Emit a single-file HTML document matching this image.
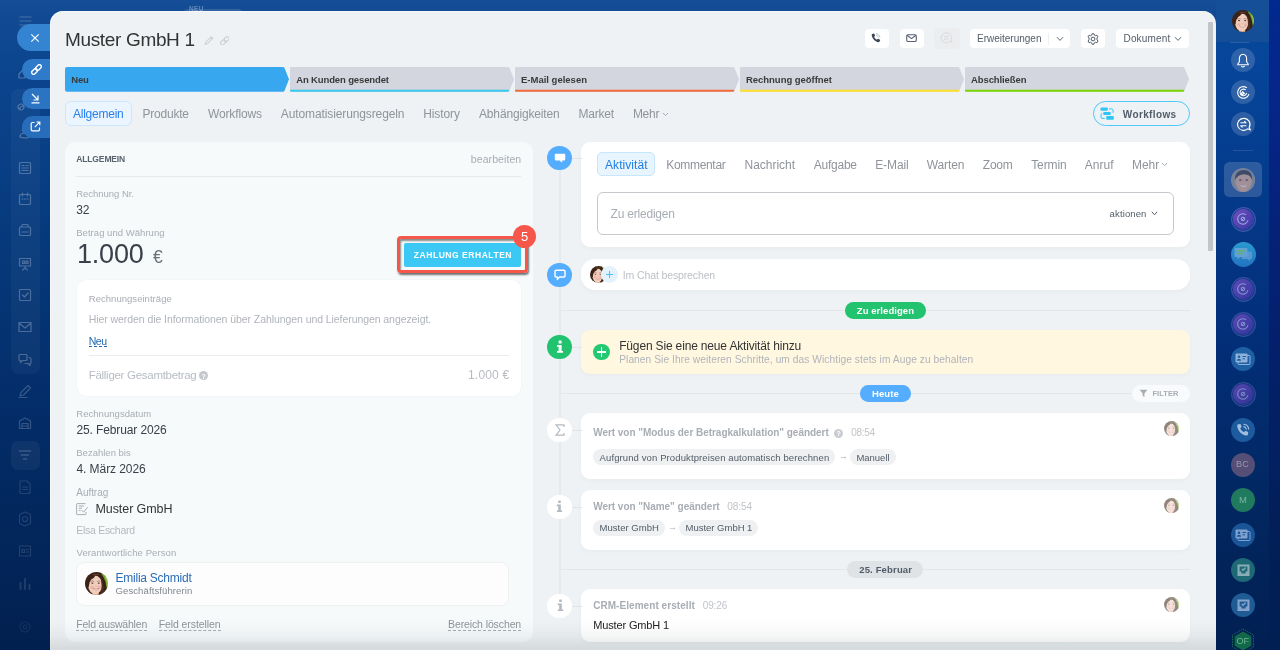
<!DOCTYPE html>
<html lang="de">
<head>
<meta charset="utf-8">
<title>CRM</title>
<style>
*{box-sizing:border-box;margin:0;padding:0}
html,body{width:1280px;height:650px;overflow:hidden}
body{font-family:"Liberation Sans",sans-serif;position:relative;background:linear-gradient(180deg,#154e97 0%,#124b94 2%,#0c468f 9%,#073c80 31%,#032c67 65%,#02204f 100%);color:#333}
.abs{position:absolute}
#rightdark{position:absolute;left:1269px;top:0;width:11px;height:650px;background:linear-gradient(180deg,#01298f 0%,#06268c 12%,#04206f 48%,#021f5a 80%,#011f52 100%)}
#rightbg{position:absolute;left:1216px;top:0;width:53px;height:650px;background:linear-gradient(180deg,#144f98 0%,#134e97 6.400%,#07479a 6.500%,#06459a 10%,#03307c 48%,#02265f 80%,#011f52 100%)}
#panel{position:absolute;left:49.500px;top:10.700px;width:1166.300px;height:660px;background:#eef2f4;border-radius:13px 13px 0 0;box-shadow:inset 0.800px 0.800px 0 rgba(255,255,255,0.6)}
#scroll{position:absolute;left:1208px;top:22px;width:5px;height:229px;background:#c2c5c6;border-radius:1px}
.t{position:absolute;white-space:nowrap;line-height:1}
/* header */
#title{left:65px;top:30px;font-size:19px;color:#333}
.hbtn{position:absolute;top:28.500px;height:19.300px;background:#fff;border-radius:4px}
/* stages */
.stage{position:absolute;top:67px;height:24.700px}
.stage svg{position:absolute;left:0;top:0}
.sl{top:75.100px;font-size:9.5px;font-weight:bold;color:#3a3a3a}
/* tabs */
.tab{position:absolute;top:108px;font-size:12px;color:#8f949b;white-space:nowrap;line-height:1}
/* left card */
#lcard{position:absolute;left:65px;top:142px;width:468px;height:500px;background:#f6fafb;border-radius:10px}
.lbl{position:absolute;left:76px;font-size:9.5px;color:#a8adb4;white-space:nowrap;line-height:1}
.val{position:absolute;left:76px;font-size:12px;color:#3a4049;white-space:nowrap;line-height:1}
.dash{border-bottom:1px dashed #9aa0a8}
/* timeline */
.card{position:absolute;left:580.800px;width:609.400px;background:#fff;border-radius:9px;box-shadow:0 2px 4px rgba(90,105,120,0.045)}
.circ{position:absolute;left:547.300px;width:24.600px;height:24.600px;border-radius:50%;margin-top:-0.300px}
.pill{position:absolute;height:16.600px;border-radius:8.300px;margin-top:0.100px;font-size:9.5px;font-weight:bold;text-align:center;line-height:16px;white-space:nowrap}
.chip{position:absolute;height:16px;border-radius:8px;background:#eef0f1;font-size:9.5px;color:#525c69;line-height:16px;padding:0 6px;white-space:nowrap}
.ct{font-size:9.5px;color:#525c69}
.pt{font-size:9.5px;font-weight:bold}
.hline{position:absolute;height:1px;background:#e4e7ea}
.ricon{position:absolute;left:1231px;width:24px;height:24px;border-radius:50%}
</style>
</head>
<body>
<div id="wrap" style="position:absolute;left:0;top:0;width:1280px;height:650px;will-change:transform">
<svg width="0" height="0" style="position:absolute"><defs>
<filter id="fb" x="-10%" y="-10%" width="120%" height="120%"><feGaussianBlur stdDeviation="1.6"/></filter>
<clipPath id="fc"><circle cx="50" cy="50" r="50"/></clipPath>
<symbol id="face" viewBox="0 0 100 100"><g clip-path="url(#fc)"><g filter="url(#fb)">
<rect x="-5" y="-5" width="110" height="110" fill="#3b2419"/>
<path d="M70 6 L104 14 L104 78 L94 70 Q92 36 70 6 Z" fill="#6d9f2e"/>
<path d="M86 22 Q96 40 94 62 L100 60 L100 20 Z" fill="#8fc043"/>
<path d="M36 84 H60 V104 H30 Z" fill="#d8a585"/>
<ellipse cx="44" cy="56" rx="30" ry="41" fill="#f0cdbc"/>
<ellipse cx="30" cy="66" rx="9" ry="8" fill="#eab5a4" opacity="0.8"/>
<ellipse cx="62" cy="66" rx="8" ry="8" fill="#eab5a4" opacity="0.8"/>
<path d="M6 64 Q2 14 46 6 Q86 6 82 62 Q80 36 64 22 Q56 15 44 17 Q40 26 28 32 Q18 42 16 64 Z" fill="#3b2419"/><path d="M30 12 Q50 2 68 14 Q56 10 44 17 Q36 14 30 12 Z" fill="#5b3c2b"/>
<path d="M70 30 Q86 50 80 104 L62 104 Q76 80 72 56 Z" fill="#4a2f22"/>
<path d="M8 60 Q10 84 24 100 L4 100 Z" fill="#3b2419"/>
<ellipse cx="32" cy="48" rx="5" ry="2.800" fill="#4a2c22"/>
<ellipse cx="60" cy="48" rx="5" ry="2.800" fill="#4a2c22"/>
<path d="M24 41 Q32 37 40 41 M52 41 Q60 37 68 41" stroke="#6b4434" stroke-width="2" fill="none"/>
<path d="M44 60 Q48 66 52 60" stroke="#d99c88" stroke-width="2.500" fill="none"/>
<path d="M31 70 Q48 90 65 70 Q48 76 31 70 Z" fill="#c4726c"/>
<path d="M35 72.500 Q48 84 61 72.500 Q48 77 35 72.500 Z" fill="#fff"/>
</g></g></symbol>
</defs></svg>
<div id="rightbg"></div>
<div id="rightdark"></div>
<div id="leftbar">
<div class="abs" style="left:183px;top:8.500px;width:60px;height:12px;border-radius:5px;background:rgba(255,255,255,0.13)"></div>
<div class="t" style="left:189px;top:6.300px;font-size:6.500px;font-weight:bold;color:rgba(255,255,255,0.33);letter-spacing:0.300px">NEU</div>
<div class="abs" style="left:11px;top:89px;width:29px;height:285px;border-radius:7px;background:rgba(255,255,255,0.035)"></div>
<div class="abs" style="left:11px;top:441px;width:29px;height:29px;border-radius:7px;background:rgba(255,255,255,0.05)"></div>
<g></g>
<svg class="abs" style="left:0;top:0" width="49" height="650" viewBox="0 0 49 650">
<g fill="none" stroke="#fff" stroke-width="1.2" stroke-linecap="round" stroke-linejoin="round">
<g opacity="0.22"><path d="M20 17 H31 M20 21 H31 M20 25 H31"/></g>
<g opacity="0.28"><path d="M19 74 L25 68 V78 H19 Z"/><path d="M21 104 a3 3 0 1 0 0.1 0 M20 109 Q20 106 24 106"/><path d="M20 137 Q20 133 25 133 Q30 133 30 137 Q25 139 20 137 Z M25 127 a2.600 2.600 0 1 0 0.1 0"/></g>
<g opacity="0.26">
<path d="M20.500 162.500 H29.500 Q30.500 162.500 30.500 163.500 V172.500 Q30.500 173.500 29.500 173.500 H20.500 Q19.500 173.500 19.500 172.500 V163.500 Q19.500 162.500 20.500 162.500 Z M22 165.500 H24 M22 168 H28 M22 170.500 H28 M26 165.500 H28"/>
<path d="M20.500 194.500 H29.500 Q30.500 194.500 30.500 195.500 V203.500 Q30.500 204.500 29.500 204.500 H20.500 Q19.500 204.500 19.500 203.500 V195.500 Q19.500 194.500 20.500 194.500 Z M22.500 193 V196 M27.500 193 V196 M22 199 H23 M24.500 199 H25.500 M27 199 H28"/>
<path d="M19.500 228 Q19.500 227 20.500 227 H29.500 Q30.500 227 30.500 228 V234.500 Q30.500 235.500 29.500 235.500 H20.500 Q19.500 235.500 19.500 234.500 Z M21 227 L22.500 224.500 H27.500 L29 227 M22 232 H28"/>
<path d="M19.500 258.500 H30.500 V266 H19.500 Z M22.500 261 H24.500 V263.500 H22.500 Z M26 261 H28 V263.500 H26 Z M25 266 V268 M22.500 270 L25 268 L27.500 270"/>
<path d="M20.500 289.500 H29.500 Q30.500 289.500 30.500 290.500 V299.500 Q30.500 300.500 29.500 300.500 H20.500 Q19.500 300.500 19.500 299.500 V290.500 Q19.500 289.500 20.500 289.500 Z M22.500 295 L24.500 297 L28 293"/>
<path d="M19 322.500 H31 V331.500 H19 Z M19 323 L25 328 L31 323"/>
<path d="M19 355.500 Q19 354.500 20 354.500 H26 Q27 354.500 27 355.500 V359.500 Q27 360.500 26 360.500 H22.500 L20.500 362.500 V360.500 H20 Q19 360.500 19 359.500 Z M29 357.500 Q31 357.500 31 359 V362.500 Q31 363.500 30 363.500 V365.500 L28 363.500 H25"/>
</g>
<g opacity="0.2">
<path d="M20 396 L21 392.500 L28 385.500 L30.500 388 L23.500 395 Z M19 397.500 H27"/>
<path d="M19.500 428.500 V421 L25 418 L30.500 421 V428.500 Z M22 428.500 V423.500 H28 V428.500 M22 426 H28"/>
</g>
<g opacity="0.13">
<path d="M19.500 451 H30.500 M21.500 455 H28.500 M23.500 459 H26.500" stroke-width="1.800"/>
<path d="M20.500 481 H27 L30 484 V492.500 Q30 493.500 29 493.500 H21 Q20 493.500 20 492.500 V482 Q20 481 20.500 481 Z M22.500 487 H27.500 M22.500 489.500 H27.500"/>
<path d="M20.500 514 L25 512 L29.500 514 Q30.500 514.500 30.500 515.500 V522.500 Q30.500 523.500 29.500 524 L25 526 L20.500 524 Q19.500 523.500 19.500 522.500 V515.500 Q19.500 514.500 20.500 514 Z M25 516.500 a2.600 2.600 0 1 0 0.1 0"/>
<path d="M19.500 546 H30.500 V556 H19.500 Z M22 549.500 H24.500 V552.500 H22 Z M26.500 549.500 H28.500 M26.500 552 H28.500"/>
<path d="M20.500 589 V583 M25 589 V579 M29.500 589 V585"  stroke-width="1.800"/>
</g>
<g opacity="0.07"><circle cx="25" cy="593" r="0"/><circle cx="25" cy="627" r="5"/><circle cx="25" cy="627" r="1.800"/></g>
</g>
</svg>
<!-- pills -->
<div class="abs" style="left:17px;top:24px;width:70px;height:27px;border-radius:14px;background:#3584d2"></div>
<svg class="abs" style="left:30px;top:33px" width="10" height="10" viewBox="0 0 10 10"><path d="M1.300 1.300 L8.700 8.700 M8.700 1.300 L1.300 8.700" stroke="#fff" stroke-width="1.150" fill="none"/></svg>
<div class="abs" style="left:22px;top:59px;width:70px;height:21px;border-radius:11px;background:#2f7bc9"></div>
<svg class="abs" style="left:30.500px;top:63.500px" width="11" height="11" viewBox="0 0 11 11"><g transform="translate(5.500 5.500) rotate(-45)" fill="none" stroke="#fff" stroke-width="1.350"><rect x="-6" y="-1.900" width="6.400" height="3.800" rx="1.900"/><rect x="-0.400" y="-1.900" width="6.400" height="3.800" rx="1.900"/></g></svg>
<div class="abs" style="left:22px;top:87.500px;width:70px;height:21px;border-radius:11px;background:#2b74c2"></div>
<svg class="abs" style="left:30px;top:93px" width="11" height="11" viewBox="0 0 11 11"><g fill="none" stroke="#fff" stroke-width="1.200"><path d="M2 1 L8 7 M8 2.500 V7 H3.500 M1.500 9.800 H9.500"/></g></svg>
<div class="abs" style="left:22px;top:116px;width:70px;height:22px;border-radius:11px;background:#276dbb"></div>
<svg class="abs" style="left:30px;top:121px" width="11" height="11" viewBox="0 0 11 11"><g fill="none" stroke="#fff" stroke-width="1.200"><path d="M4.500 1.500 H2.500 Q1.200 1.500 1.200 2.800 V8.500 Q1.200 9.800 2.500 9.800 H8.200 Q9.500 9.800 9.500 8.500 V6.500"/><path d="M4.800 6.200 L9.600 1.200 M6.500 1 H9.800 V4.300"/></g></svg>
</div>
<div id="panel"></div>
<div id="scroll"></div>
<div id="header">
<div class="t" id="title" style="letter-spacing:-0.341px;left:65px;">Muster GmbH 1</div>
<svg class="abs" style="left:204.300px;top:35.300px" width="10.500" height="10.500" viewBox="0 0 10 10"><path d="M1.200 8.800 L1.800 6.600 L6.800 1.600 L8.400 3.200 L3.400 8.200 Z M6 2.400 L7.600 4" fill="none" stroke="#cdd0d4" stroke-width="1.050"/></svg>
<svg class="abs" style="left:219.700px;top:35.700px" width="9.600" height="9.600" viewBox="0 0 11 11"><g transform="translate(5.500 5.500) rotate(-42)" fill="none" stroke="#cdd0d4" stroke-width="1.300"><rect x="-5.800" y="-2.200" width="6.400" height="4.400" rx="2.200"/><rect x="-0.600" y="-2.200" width="6.400" height="4.400" rx="2.200"/></g></svg>
<div class="hbtn" style="left:864.500px;width:24px"><svg class="abs" style="left:6.500px;top:4.300px" width="10" height="10" viewBox="0 0 10 10"><path d="M1.300 0.900 L2.700 0.500 Q3.100 0.400 3.300 0.800 L4 2.600 Q4.100 3 3.800 3.200 L3.100 3.800 C3.600 5 4.600 6.100 5.900 6.700 L6.600 5.900 Q6.900 5.600 7.300 5.800 L8.900 6.700 Q9.300 6.900 9.100 7.300 L8.600 8.600 C8.400 9.100 7.900 9.300 7.400 9.200 C4 8.500 1.300 5.700 0.700 2.200 C0.600 1.600 0.800 1.100 1.300 0.900 Z" fill="#3d4753"/><path d="M5.400 0.800 C7.200 1 8.600 2.400 8.800 4.200 M5.600 2.600 C6.300 2.800 6.900 3.400 7.100 4.100" fill="none" stroke="#9aa1aa" stroke-width="0.700" stroke-linecap="round" stroke-dasharray="1.200 0.800"/></svg></div>
<div class="hbtn" style="left:899.500px;width:24px"><svg class="abs" style="left:6.500px;top:5.600px" width="11" height="8.250" viewBox="0 0 12 9"><rect x="0.800" y="0.800" width="10.400" height="7.400" rx="1.300" fill="none" stroke="#586270" stroke-width="1.200"/><path d="M1.200 1.300 L6 5 L10.800 1.300" fill="none" stroke="#586270" stroke-width="1.200"/></svg></div>
<div class="hbtn" style="left:934px;width:25.500px;top:27.700px;height:21px;background:#ebedef;border-radius:5px"><svg class="abs" style="left:6px;top:4px" width="13" height="12" viewBox="0 0 13 12"><g fill="none" stroke="#d6d9dd" stroke-width="0.900"><path d="M6.2 0.8 A5 5 0 1 0 9.6 9.4 L12 10.4 L11 8.2 A5 5 0 0 0 6.2 0.8 Z"/><path d="M4 4.6 H8.2 M7 3.4 L8.3 4.6 M8.4 7 H4.2 M5.4 8.2 L4.1 7"/></g></svg></div>
<div class="hbtn" style="left:970px;width:100px"><span class="t" style="left:7px;top:5px;font-size:10px;color:#525c69">Erweiterungen</span><div class="abs" style="left:78px;top:4px;width:1px;height:12px;background:#edf0f2"></div><svg class="abs" style="left:86px;top:7px" width="8" height="6" viewBox="0 0 8 6"><path d="M1 1.2 L4 4.400 L7 1.200" fill="none" stroke="#5f6975" stroke-width="1"/></svg></div>
<div class="hbtn" style="left:1081px;width:24px"><svg class="abs" style="left:6px;top:4px" width="12" height="12" viewBox="0 0 12 12"><path d="M5 0.8 H7 L7.4 2.2 L8.6 2.8 L9.9 2.2 L11 3.9 L10 4.9 V6.9 L11 8 L9.9 9.8 L8.6 9.2 L7.4 9.8 L7 11.2 H5 L4.6 9.8 L3.4 9.2 L2.1 9.8 L1 8 L2 6.9 V4.9 L1 3.9 L2.1 2.2 L3.4 2.8 L4.6 2.2 Z" fill="none" stroke="#525c69" stroke-width="1" stroke-linejoin="round"/><circle cx="6" cy="6" r="1.9" fill="none" stroke="#525c69" stroke-width="1"/></svg></div>
<div class="hbtn" style="left:1116px;width:73px"><span class="t" style="left:7.500px;top:5px;font-size:10px;color:#525c69;letter-spacing:0.170px">Dokument</span><svg class="abs" style="left:58px;top:7px" width="8" height="6" viewBox="0 0 8 6"><path d="M1 1.2 L4 4.400 L7 1.200" fill="none" stroke="#5f6975" stroke-width="1"/></svg></div>
</div>
<div id="stages"><div class="stage" style="left:65px;width:224px"><svg width="224" height="24.700" viewBox="0 0 224 24" preserveAspectRatio="none"><path d="M2 0 H218 Q219 0 219.5 1 L224 12 L219.5 23 Q219 24 218 24 H2 Q0 24 0 22 V2 Q0 0 2 0 Z" fill="#37a8ef"/></svg></div><div class="stage" style="left:290px;width:224px"><svg width="224" height="24.700" viewBox="0 0 224 24" preserveAspectRatio="none"><path d="M1 0 H218 Q219 0 219.5 1 L224 12 L219.5 23 Q219 24 218 24 H1 Q0 24 0 23 V1 Q0 0 1 0 Z" fill="#d3d6de"/><path d="M0 22.2 H219.3 L218.6 24 H1 Q0 24 0 23 Z" fill="#39c8f0"/></svg></div><div class="stage" style="left:515px;width:224px"><svg width="224" height="24.700" viewBox="0 0 224 24" preserveAspectRatio="none"><path d="M1 0 H218 Q219 0 219.5 1 L224 12 L219.5 23 Q219 24 218 24 H1 Q0 24 0 23 V1 Q0 0 1 0 Z" fill="#d3d6de"/><path d="M0 22.2 H219.3 L218.6 24 H1 Q0 24 0 23 Z" fill="#f26b3a"/></svg></div><div class="stage" style="left:740px;width:224px"><svg width="224" height="24.700" viewBox="0 0 224 24" preserveAspectRatio="none"><path d="M1 0 H218 Q219 0 219.5 1 L224 12 L219.5 23 Q219 24 218 24 H1 Q0 24 0 23 V1 Q0 0 1 0 Z" fill="#d3d6de"/><path d="M0 22.2 H219.3 L218.6 24 H1 Q0 24 0 23 Z" fill="#ffe028"/></svg></div><div class="stage" style="left:965px;width:224px"><svg width="224" height="24.700" viewBox="0 0 224 24" preserveAspectRatio="none"><path d="M1 0 H218 Q219 0 219.5 1 L224 12 L219.5 23 Q219 24 218 24 H1 Q0 24 0 23 V1 Q0 0 1 0 Z" fill="#d3d6de"/><path d="M0 22.2 H219.3 L218.6 24 H1 Q0 24 0 23 Z" fill="#7bd500"/></svg></div></div>
<div class="t sl" style="letter-spacing:-0.131px;left:71.2px">Neu</div>
<div class="t sl" style="letter-spacing:-0.130px;left:296.2px">An Kunden gesendet</div>
<div class="t sl" style="letter-spacing:0.000px;left:521px">E-Mail gelesen</div>
<div class="t sl" style="letter-spacing:-0.035px;left:746px">Rechnung geöffnet</div>
<div class="t sl" style="letter-spacing:-0.099px;left:971px">Abschließen</div>
<div id="tabs">
<div class="abs" style="left:65px;top:101px;width:66.700px;height:25px;background:#ebf5ff;border:1px solid #cbe6fd;border-radius:6px"></div>
<div class="tab" style="letter-spacing:-0.243px;left:73px;color:#2680f0">Allgemein</div>
<div class="tab" style="letter-spacing:-0.220px;left:142.5px">Produkte</div>
<div class="tab" style="letter-spacing:-0.140px;left:208px">Workflows</div>
<div class="tab" style="letter-spacing:-0.113px;left:280.8px">Automatisierungsregeln</div>
<div class="tab" style="letter-spacing:-0.091px;left:423.2px">History</div>
<div class="tab" style="letter-spacing:-0.157px;left:479px">Abhängigkeiten</div>
<div class="tab" style="letter-spacing:-0.175px;left:578.4px">Market</div>
<div class="tab" style="letter-spacing:-0.281px;left:632.9px">Mehr</div>
<svg class="abs" style="left:662px;top:112px" width="7" height="5" viewBox="0 0 7 5"><path d="M1 1 L3.5 3.6 L6 1" fill="none" stroke="#a8adb4" stroke-width="1"/></svg>
<div class="abs" style="left:1093px;top:101px;width:97px;height:25px;border:1px solid #4fc8fb;border-radius:13px"></div>
<svg class="abs" style="left:1100px;top:107px" width="15" height="14" viewBox="0 0 15 14"><g fill="#2fc6f6"><rect x="0.5" y="0.5" width="7.3" height="3.2" rx="1"/><rect x="3.2" y="4.9" width="7.6" height="3.1" rx="1"/><rect x="6.2" y="9" width="7.6" height="3.7" rx="1"/></g><path d="M9 1.900 H11.600 Q13.100 1.900 13.100 3.400 V5.800 M2.200 6.600 H2 Q1 6.600 1 7.600 V10.400 Q1 11.400 2 11.400 H4.800" fill="none" stroke="#2fc6f6" stroke-width="1"/></svg>
<div class="t" style="letter-spacing:0.364px;left:1122.8px;top:109.500px;font-size:10px;font-weight:bold;color:#525c69">Workflows</div>
</div>
<div id="lcard"></div>
<div id="left">
<div class="t" style="letter-spacing:-0.133px;left:76.25px;top:155.2px;font-size:8.5px;font-weight:bold;color:#59626e;">ALLGEMEIN</div>
<div class="t" style="letter-spacing:0.086px;left:470.8px;top:154px;font-size:10.5px;color:#a8adb4">bearbeiten</div>
<div class="abs" style="left:76px;top:176px;width:445px;height:1px;background:#e5e9ec"></div>
<div class="lbl" style="letter-spacing:-0.031px;left:76.25px;top:189px">Rechnung Nr.</div>
<div class="val" style="letter-spacing:-0.109px;left:76.25px;top:204px">32</div>
<div class="lbl" style="letter-spacing:0.034px;left:76.25px;top:227.8px">Betrag und Währung</div>
<div class="t" style="letter-spacing:-0.204px;left:77px;top:241px;font-size:27px;color:#3a404a">1.000</div>
<div class="t" style="letter-spacing:0.000px;left:153px;top:249px;font-size:17.500px;color:#6a717b">€</div>
<!-- highlight button -->
<div class="abs" style="left:397px;top:236px;width:131px;height:37px;border:3px solid #f5574b;border-radius:4px;box-shadow:1px 2px 2px rgba(0,0,0,0.55), inset 1px 2px 2px rgba(0,0,0,0.45)"></div>
<div class="abs" style="left:404px;top:243px;width:117px;height:24px;background:#3bc8f5;border-radius:2px"></div>
<div class="t" style="letter-spacing:0.543px;left:413.8px;top:251px;font-size:8.5px;font-weight:bold;color:#fff;">ZAHLUNG ERHALTEN</div>
<div class="abs" style="left:513px;top:225px;width:23px;height:23px;border-radius:50%;background:#f5574b"></div>
<div class="t" style="left:521px;top:230px;font-size:13px;color:#fff">5</div>
<!-- inner card -->
<div class="abs" style="left:77px;top:280px;width:444.200px;height:116.400px;background:#fff;border-radius:9px;box-shadow:0 0 0 0.600px #f1f3f4"></div>
<div class="t" style="letter-spacing:0.037px;left:88.75px;top:294px;font-size:9.5px;color:#a8adb4">Rechnungseinträge</div>
<div class="t" style="letter-spacing:-0.070px;left:88.75px;top:314px;font-size:10.5px;color:#b0b4ba">Hier werden die Informationen über Zahlungen und Lieferungen angezeigt.</div>
<div class="t" style="letter-spacing:-0.511px;left:88.75px;top:336.300px;font-size:10.500px;color:#2067b0">Neu</div>
<div class="abs" style="left:89px;top:346px;width:18px;height:0;border-top:1px dashed #2067b0"></div>
<div class="abs" style="left:89px;top:355px;width:420px;height:1px;background:#e8ecee"></div>
<div class="t" style="letter-spacing:-0.289px;left:88.75px;top:369.500px;font-size:11.5px;color:#b8bcc2">Fälliger Gesamtbetrag</div>
<div class="abs" style="left:199px;top:371px;width:9px;height:9px;border-radius:50%;background:#c4c8cc"></div>
<div class="t" style="left:201.5px;top:372.5px;font-size:7px;font-weight:bold;color:#fff">?</div>
<div class="t" style="letter-spacing:0.192px;left:468px;top:369px;font-size:12px;color:#b8bcc2">1.000 €</div>
<div class="lbl" style="letter-spacing:0.041px;left:76.25px;top:409px">Rechnungsdatum</div>
<div class="val" style="letter-spacing:-0.122px;left:76.5px;top:424px">25. Februar 2026</div>
<div class="lbl" style="letter-spacing:0.008px;left:76.25px;top:448px">Bezahlen bis</div>
<div class="val" style="letter-spacing:-0.073px;left:76.5px;top:463px">4. März 2026</div>
<div class="lbl" style="letter-spacing:-0.043px;font-size:10px;left:76.25px;top:487.8px">Auftrag</div>
<svg class="abs" style="left:76px;top:503px" width="13" height="13" viewBox="0 0 13 13"><g fill="none" stroke="#a8adb4" stroke-width="1"><path d="M9.5 0.6 H1.2 Q0.6 0.6 0.6 1.2 V11 Q0.6 11.6 1.2 11.6 H9.4 Q10 11.6 10 11 V9"/><path d="M2.8 3 H8 M2.8 5.2 H6 M2.8 7.4 H4.6"/><path d="M5.6 7.2 L7.6 9.2 L11.6 4.2"/></g></svg>
<div class="t" style="letter-spacing:-0.080px;left:95.5px;top:503.2px;font-size:12.5px;color:#333">Muster GmbH</div>
<div class="t" style="letter-spacing:-0.284px;left:76.25px;top:525px;font-size:10.5px;color:#b5b9be">Elsa Eschard</div>
<div class="lbl" style="letter-spacing:0.098px;left:76.5px;top:548px">Verantwortliche Person</div>
<div class="abs" style="left:76px;top:562px;width:433px;height:44px;background:#fdfdfd;border:1px solid #eef0f2;border-radius:8px"></div>
<svg class="abs" style="left:84.600px;top:571.800px" width="23" height="23"><use href="#face"/></svg>
<div class="t" style="letter-spacing:-0.239px;left:115.5px;top:571.800px;font-size:12px;color:#2b6cb3">Emilia Schmidt</div>
<div class="t" style="letter-spacing:0.110px;left:115.5px;top:586px;font-size:9.5px;color:#80868e">Geschäftsführerin</div>
<div class="t" style="letter-spacing:-0.197px;left:76.25px;top:619px;font-size:10.5px;color:#8f949b">Feld auswählen</div>
<div class="abs" style="left:76px;top:630px;width:71px;height:0;border-top:1px dashed #a8adb4"></div>
<div class="t" style="letter-spacing:-0.099px;left:158.75px;top:619px;font-size:10.5px;color:#8f949b">Feld erstellen</div>
<div class="abs" style="left:159px;top:630px;width:62px;height:0;border-top:1px dashed #a8adb4"></div>
<div class="t" style="letter-spacing:-0.108px;left:448px;top:619px;font-size:10.5px;color:#8f949b">Bereich löschen</div>
<div class="abs" style="left:448px;top:630px;width:73px;height:0;border-top:1px dashed #a8adb4"></div>
</div>
<div id="timeline">
<div class="abs" style="left:559px;top:160px;width:1.800px;height:446px;background:#e7eaed"></div>
<!-- card A -->
<div class="card" style="top:142px;height:105px"></div>
<div class="abs" style="left:570px;top:158px;width:12px;height:1px;background:#e1e5e8"></div>
<div class="circ" style="top:146px;background:#55adff"></div>
<svg class="abs" style="left:554px;top:153px" width="12" height="11" viewBox="0 0 12 11"><path d="M1.6 0.8 H10.4 Q11.2 0.8 11.2 1.6 V6.6 Q11.2 7.4 10.4 7.4 H8.2 V9.8 L5.6 7.4 H1.6 Q0.8 7.4 0.8 6.6 V1.6 Q0.8 0.8 1.6 0.8 Z" fill="#fff"/></svg>
<div class="abs" style="left:597px;top:152px;width:58px;height:24px;background:#e8f5fe;border:1px solid #c5e6fb;border-radius:5px"></div>
<div class="tab" style="letter-spacing:0.061px;left:605px;top:158.800px;color:#1f7ee6">Aktivität</div>
<div class="tab" style="letter-spacing:-0.316px;left:666.25px;top:158.800px">Kommentar</div>
<div class="tab" style="letter-spacing:-0.024px;left:744.5px;top:158.800px">Nachricht</div>
<div class="tab" style="letter-spacing:-0.244px;left:813.75px;top:158.800px">Aufgabe</div>
<div class="tab" style="letter-spacing:-0.083px;left:875.2px;top:158.800px">E-Mail</div>
<div class="tab" style="letter-spacing:-0.129px;left:926.8px;top:158.800px">Warten</div>
<div class="tab" style="letter-spacing:-0.230px;left:982.8px;top:158.800px">Zoom</div>
<div class="tab" style="letter-spacing:-0.083px;left:1031.2px;top:158.800px">Termin</div>
<div class="tab" style="letter-spacing:0.028px;left:1084.8px;top:158.800px">Anruf</div>
<div class="tab" style="letter-spacing:-0.051px;left:1132px;top:158.800px">Mehr</div>
<svg class="abs" style="left:1161px;top:162px" width="7" height="5" viewBox="0 0 7 5"><path d="M1 1 L3.5 3.6 L6 1" fill="none" stroke="#a8adb4" stroke-width="1"/></svg>
<div class="abs" style="left:597px;top:192px;width:577px;height:43px;border:1px solid #c6cace;border-radius:6px;background:#fff"></div>
<div class="t" style="letter-spacing:-0.202px;left:610.5px;top:208px;font-size:12px;color:#a8adb4">Zu erledigen</div>
<div class="t" style="letter-spacing:0.125px;left:1109.6px;top:209px;font-size:9.5px;color:#525c69">aktionen</div>
<svg class="abs" style="left:1151px;top:211px" width="7" height="5" viewBox="0 0 7 5"><path d="M0.8 0.8 L3.5 3.8 L6.2 0.8" fill="none" stroke="#525c69" stroke-width="1"/></svg>
<!-- chat -->
<div class="card" style="top:259px;height:31px;border-radius:14px"></div>
<div class="circ" style="top:263px;background:#55adff"></div>
<svg class="abs" style="left:554px;top:269px" width="12" height="12" viewBox="0 0 12 12"><path d="M2 1.2 H10 Q11 1.2 11 2.2 V7 Q11 8 10 8 H5.6 L3.4 10.4 V8 H2 Q1 8 1 7 V2.2 Q1 1.2 2 1.2 Z" fill="none" stroke="#fff" stroke-width="1.4" stroke-linejoin="round"/></svg>
<svg class="abs" style="left:589.800px;top:266px" width="17" height="17"><use href="#face"/></svg>
<div class="abs" style="left:601.300px;top:266.300px;width:16.300px;height:16.300px;border-radius:50%;background:#e3f2fd"></div>
<div class="abs" style="left:605.600px;top:273.900px;width:7.400px;height:1.100px;background:#3bc8f5"></div><div class="abs" style="left:608.750px;top:270.750px;width:1.100px;height:7.400px;background:#3bc8f5"></div>
<div class="t" style="letter-spacing:-0.127px;left:622.8px;top:270px;font-size:10.5px;color:#bdc1c6">Im Chat besprechen</div>
<!-- todo divider -->
<div class="hline" style="left:560px;top:310px;width:630px"></div>
<div class="pill" style="left:845px;top:302px;width:81px;background:#22c36f"></div><div class="t pt" style="letter-spacing:0.065px;left:856.8px;top:305.5px;color:#fff">Zu erledigen</div>
<!-- yellow -->
<div class="card" style="top:330.400px;height:43.200px;background:#fff7e0"></div>
<div class="abs" style="left:570px;top:347px;width:12px;height:1px;background:#e1e5e8"></div>
<div class="circ" style="top:335px;background:#22c36f"></div>
<svg class="abs" style="left:556px;top:340px" width="8" height="14" viewBox="0 0 8 14"><g fill="#fff"><rect x="2.6" y="0.6" width="3" height="3" rx="0.6"/><path d="M1 5 H5.6 V11 H7 V12.8 H1 V11 H2.6 V6.8 H1 Z"/></g></svg>
<div class="abs" style="left:593.100px;top:343.600px;width:16.800px;height:16.800px;border-radius:50%;background:#22c972"></div>
<div class="abs" style="left:596.800px;top:351.400px;width:9.400px;height:1.200px;background:#fff"></div>
<div class="abs" style="left:600.900px;top:347.300px;width:1.200px;height:9.400px;background:#fff"></div>
<div class="t" style="letter-spacing:-0.161px;left:619.2px;top:339.800px;font-size:12px;color:#333">Fügen Sie eine neue Aktivität hinzu</div>
<div class="t" style="letter-spacing:0.069px;left:619.2px;top:355.300px;font-size:10.2px;color:#b0b4ba">Planen Sie Ihre weiteren Schritte, um das Wichtige stets im Auge zu behalten</div>
<!-- heute divider -->
<div class="hline" style="left:560px;top:393px;width:630px"></div>
<div class="pill" style="left:860px;top:385px;width:51px;background:#55adff"></div><div class="t pt" style="letter-spacing:0.100px;left:872px;top:388.5px;color:#fff">Heute</div>
<div class="pill" style="left:1132px;top:385px;width:58px;background:#f8fafb"></div>
<svg class="abs" style="left:1139px;top:389px" width="9" height="9" viewBox="0 0 9 9"><path d="M0.6 0.8 H8.4 L5.4 4.4 V8 L3.6 6.8 V4.4 Z" fill="#a8adb4"/></svg>
<div class="t" style="letter-spacing:0.061px;left:1152.4px;top:389.500px;font-size:7.5px;font-weight:bold;color:#a8adb4;">FILTER</div>
<!-- card 1 -->
<div class="card" style="top:412.900px;height:66.100px"></div>
<div class="abs" style="left:570px;top:430px;width:12px;height:1px;background:#e1e5e8"></div>
<div class="circ" style="top:418px;background:#fff"></div>
<svg class="abs" style="left:555px;top:424px" width="10" height="12" viewBox="0 0 10 12"><path d="M9 3 V0.8 H1 L5 6 L1 11.2 H9 V9" fill="none" stroke="#b4b9bf" stroke-width="1.2"/></svg>
<div class="t" style="letter-spacing:-0.033px;left:593.2px;top:428px;font-size:10px;font-weight:bold;color:#a8adb4">Wert von "Modus der Betragkalkulation" geändert</div>
<div class="abs" style="left:834px;top:428.500px;width:9px;height:9px;border-radius:50%;background:#c9cdd1"></div>
<div class="t" style="left:836.500px;top:430px;font-size:7px;font-weight:bold;color:#fff">?</div>
<div class="t" style="letter-spacing:-0.257px;left:851.2px;top:428px;font-size:10px;color:#c0c4c8">08:54</div>
<div class="chip" style="left:593px;top:449px;width:242px"></div><div class="t ct" style="letter-spacing:0.107px;left:599.6px;top:452.5px">Aufgrund von Produktpreisen automatisch berechnen</div>
<div class="t" style="left:839px;top:452px;font-size:9px;color:#a8adb4">→</div>
<div class="chip" style="left:850px;top:449px;width:46px"></div><div class="t ct" style="letter-spacing:-0.012px;left:856.4px;top:452.5px">Manuell</div>
<svg class="abs" style="left:1164px;top:421px;opacity:0.55" width="15.200" height="15.200"><use href="#face"/></svg>
<!-- card 2 -->
<div class="card" style="top:490px;height:59.700px"></div>
<div class="abs" style="left:570px;top:507px;width:12px;height:1px;background:#e1e5e8"></div>
<div class="circ" style="top:495px;background:#fff"></div>
<svg class="abs" style="left:556.300px;top:500px" width="7" height="13" viewBox="0 0 7 13"><g fill="#b4b9bf"><rect x="2.2" y="0.5" width="2.6" height="2.6" rx="0.5"/><path d="M0.8 4.6 H4.8 V10.4 H6.2 V12 H0.8 V10.4 H2.2 V6.2 H0.8 Z"/></g></svg>
<div class="t" style="letter-spacing:-0.031px;left:593.2px;top:502px;font-size:10px;font-weight:bold;color:#a8adb4">Wert von "Name" geändert</div>
<div class="t" style="letter-spacing:-0.057px;left:727.2px;top:502px;font-size:10px;color:#c0c4c8">08:54</div>
<div class="chip" style="left:593px;top:519.5px;width:72px"></div><div class="t ct" style="letter-spacing:0.007px;left:599.6px;top:523px">Muster GmbH</div>
<div class="t" style="left:668px;top:522.500px;font-size:9px;color:#a8adb4">→</div>
<div class="chip" style="left:679px;top:519.5px;width:79px"></div><div class="t ct" style="letter-spacing:-0.021px;left:685.6px;top:523px">Muster GmbH 1</div>
<svg class="abs" style="left:1164px;top:498px;opacity:0.55" width="15.200" height="15.200"><use href="#face"/></svg>
<!-- feb divider -->
<div class="hline" style="left:560px;top:569px;width:630px"></div>
<div class="pill" style="left:847px;top:561px;width:76px;background:#dfe3e6"></div><div class="t pt" style="letter-spacing:0.157px;left:859.2px;top:564.5px;color:#525c69">25. Februar</div>
<!-- card 3 -->
<div class="card" style="top:589px;height:53px"></div>
<div class="abs" style="left:570px;top:606px;width:12px;height:1px;background:#e1e5e8"></div>
<div class="circ" style="top:594px;background:#fff"></div>
<svg class="abs" style="left:556.500px;top:599px" width="7" height="13" viewBox="0 0 7 13"><g fill="#b4b9bf"><rect x="2.2" y="0.5" width="2.6" height="2.6" rx="0.5"/><path d="M0.8 4.6 H4.8 V10.4 H6.2 V12 H0.8 V10.4 H2.2 V6.2 H0.8 Z"/></g></svg>
<div class="t" style="letter-spacing:0.054px;left:593.2px;top:601px;font-size:10px;font-weight:bold;color:#a8adb4">CRM-Element erstellt</div>
<div class="t" style="letter-spacing:-0.157px;left:702.8px;top:601px;font-size:10px;color:#c0c4c8">09:26</div>
<div class="t" style="letter-spacing:-0.137px;left:593.2px;top:620.300px;font-size:11px;color:#222">Muster GmbH 1</div>
<svg class="abs" style="left:1164px;top:597px;opacity:0.55" width="15.200" height="15.200"><use href="#face"/></svg>
</div>
<div class="abs" style="left:49px;top:618px;width:1167px;height:32px;background:linear-gradient(180deg,rgba(30,40,50,0) 0%,rgba(30,40,50,0.015) 30%,rgba(30,40,50,0.05) 60%,rgba(30,40,50,0.09) 80%,rgba(30,40,50,0.12) 100%)"></div>
<div id="rightbar">

<div class="abs" style="left:1229.500px;top:42px;width:19.500px;height:1px;background:rgba(255,255,255,0.13)"></div>
<svg class="abs" style="left:1231.500px;top:9.500px" width="22" height="22"><use href="#face"/></svg>
<div class="ricon" style="top:48px;background:rgba(255,255,255,0.16)"></div>
<svg class="abs" style="left:1236px;top:52.500px" width="14" height="16" viewBox="0 0 14 16"><path d="M7 1.200 Q3.400 1.600 3.400 5.600 V8.800 L1.800 11 V11.800 H12.200 V11 L10.600 8.800 V5.600 Q10.600 1.600 7 1.200 Z M5.400 13 Q7 15 8.600 13" fill="none" stroke="#fff" stroke-width="1.100" stroke-linejoin="round"/></svg>
<div class="ricon" style="top:80px;background:rgba(255,255,255,0.16)"></div>
<svg class="abs" style="left:1235.500px;top:84.500px" width="15" height="15" viewBox="0 0 15 15"><g fill="none" stroke="#fff" stroke-width="1.100" stroke-linecap="round"><path d="M12.900 9.400 A5.800 5.800 0 1 1 10.600 2.600"/><path d="M10.600 8.200 A3.300 3.300 0 1 1 9.300 4.700"/><path d="M6.600 6.600 L8.400 8.400 M6.400 7.600 a1 1 0 1 0 0.100 0"/></g></svg>
<div class="ricon" style="top:112px;background:rgba(255,255,255,0.16)"></div>
<svg class="abs" style="left:1235.500px;top:116.500px" width="16" height="16" viewBox="0 0 16 16"><g fill="none" stroke="#fff" stroke-width="1.100" stroke-linecap="round" stroke-linejoin="round"><path d="M7.400 1.400 A6 6 0 1 0 11.600 11.800 L14.400 13 L13.200 10.400 A6 6 0 0 0 7.400 1.400 Z"/><path d="M4.800 5.800 H10 M8.600 4.400 L10 5.800 M10 8.800 H4.800 M6.200 10.200 L4.800 8.800"/></g></svg>
<div class="abs" style="left:1233px;top:149.500px;width:20px;height:1px;background:rgba(255,255,255,0.12)"></div>
<div class="abs" style="left:1223.600px;top:162.200px;width:38.200px;height:35.200px;border-radius:5.500px;background:rgba(255,255,255,0.16)"></div>
<svg class="abs" style="left:1230.600px;top:167.600px" width="24.200" height="24.200" viewBox="0 0 24 24"><defs><clipPath id="mc"><circle cx="12" cy="12" r="12"/></clipPath><filter id="mb"><feGaussianBlur stdDeviation="0.45"/></filter></defs><g clip-path="url(#mc)"><g filter="url(#mb)"><rect x="-2" y="-2" width="28" height="28" fill="#76819a"/><path d="M5 26 Q6 20 12 20 Q18 20 19 26 Z" fill="#8f8794"/><ellipse cx="12.500" cy="13" rx="8.200" ry="10.500" fill="#9f8f99"/><path d="M4 12 Q3.500 2.500 13 2 Q21.500 2.500 21 12 Q19.500 6.500 13 6.200 Q6.500 6.500 4 12 Z" fill="#3e4866"/><ellipse cx="9.300" cy="12" rx="1.500" ry="0.800" fill="#5b536a"/><ellipse cx="15.700" cy="12" rx="1.500" ry="0.800" fill="#5b536a"/><path d="M8.800 17 Q12.500 20 16.200 17 Q12.500 18.200 8.800 17 Z" fill="#c9c3cf"/></g></g></svg>
<div class="abs" style="left:1230.500px;top:206.7px;width:25px;height:25px;opacity:0.95"><div class="abs" style="left:0;top:0;width:25px;height:25px;border-radius:50%;border:1px solid rgba(140,135,225,0.5);box-shadow:inset 0 0 0 1.200px rgba(0,20,110,0.35),inset 0 0 0 2.100px rgba(140,135,225,0.35)"></div>
<div class="abs" style="left:2.500px;top:2.500px;width:20px;height:20px;border-radius:50%;background:linear-gradient(135deg,#7450c4,#4038a8)"></div>
<svg class="abs" style="left:5.500px;top:5.500px" width="14" height="14" viewBox="0 0 14 14"><g fill="none" stroke="rgba(175,195,230,0.8)" stroke-width="1.100" stroke-linecap="round"><path d="M11.800 8.600 A5.200 5.200 0 1 1 9.600 2.500"/><circle cx="7" cy="7" r="2.300" fill="rgba(175,195,230,0.75)" stroke="none"/><path d="M6.200 6.200 L7.800 7.800" stroke="#4a3cae" stroke-width="0.900"/></g></svg></div><div class="abs" style="left:1230.500px;top:241.95px;width:25px;height:25px;border-radius:50%;background:linear-gradient(180deg,#2a9ad2,#2273c0)"></div>
<svg class="abs" style="left:1233.500px;top:246.95px" width="19" height="16" viewBox="0 0 19 16"><path d="M8 4.500 H17 Q18 4.500 18 5.500 V11 Q18 12 17 12 H16 V14 L13.600 12 H8 Z" fill="#5797d0"/><path d="M1.500 1 H12.500 Q13.500 1 13.500 2 V9 Q13.500 10 12.500 10 H6 L3.500 12.500 V10 H1.500 Q0.500 10 0.500 9 V2 Q0.500 1 1.500 1 Z" fill="#62a0d6"/><path d="M2.800 3.800 H11 M2.800 6.600 H8.600" stroke="#5eb368" stroke-width="1.500"/></svg>
<div class="abs" style="left:1230.500px;top:276.8px;width:25px;height:25px;opacity:0.82"><div class="abs" style="left:0;top:0;width:25px;height:25px;border-radius:50%;border:1px solid rgba(140,135,225,0.5);box-shadow:inset 0 0 0 1.200px rgba(0,20,110,0.35),inset 0 0 0 2.100px rgba(140,135,225,0.35)"></div>
<div class="abs" style="left:2.500px;top:2.500px;width:20px;height:20px;border-radius:50%;background:linear-gradient(135deg,#7450c4,#4038a8)"></div>
<svg class="abs" style="left:5.500px;top:5.500px" width="14" height="14" viewBox="0 0 14 14"><g fill="none" stroke="rgba(175,195,230,0.8)" stroke-width="1.100" stroke-linecap="round"><path d="M11.800 8.600 A5.200 5.200 0 1 1 9.600 2.500"/><circle cx="7" cy="7" r="2.300" fill="rgba(175,195,230,0.75)" stroke="none"/><path d="M6.200 6.200 L7.800 7.800" stroke="#4a3cae" stroke-width="0.900"/></g></svg></div><div class="abs" style="left:1230.500px;top:311.85px;width:25px;height:25px;opacity:0.8"><div class="abs" style="left:0;top:0;width:25px;height:25px;border-radius:50%;border:1px solid rgba(140,135,225,0.5);box-shadow:inset 0 0 0 1.200px rgba(0,20,110,0.35),inset 0 0 0 2.100px rgba(140,135,225,0.35)"></div>
<div class="abs" style="left:2.500px;top:2.500px;width:20px;height:20px;border-radius:50%;background:linear-gradient(135deg,#7450c4,#4038a8)"></div>
<svg class="abs" style="left:5.500px;top:5.500px" width="14" height="14" viewBox="0 0 14 14"><g fill="none" stroke="rgba(175,195,230,0.8)" stroke-width="1.100" stroke-linecap="round"><path d="M11.800 8.600 A5.200 5.200 0 1 1 9.600 2.500"/><circle cx="7" cy="7" r="2.300" fill="rgba(175,195,230,0.75)" stroke="none"/><path d="M6.200 6.200 L7.800 7.800" stroke="#4a3cae" stroke-width="0.900"/></g></svg></div><div class="ricon" style="top:347.4px;background:#1f5fa4"></div><svg class="abs" style="left:1235px;top:353.4px" width="16" height="13" viewBox="0 0 16 13"><rect x="3" y="2.500" width="12" height="9" rx="1" fill="none" stroke="#8fb2dc" stroke-width="1"/><rect x="0.500" y="0.500" width="12" height="9" rx="1" fill="#8fb2dc"/><circle cx="4" cy="3.800" r="1.300" fill="#1f5fa4"/><path d="M1.800 7.800 Q1.800 5.800 4 5.800 Q6.200 5.800 6.200 7.800 Z" fill="#1f5fa4"/><path d="M7.500 3.500 H11 M7.500 5.800 H10" stroke="#1f5fa4" stroke-width="1"/></svg><div class="abs" style="left:1230.500px;top:381.95px;width:25px;height:25px;opacity:0.74"><div class="abs" style="left:0;top:0;width:25px;height:25px;border-radius:50%;border:1px solid rgba(140,135,225,0.5);box-shadow:inset 0 0 0 1.200px rgba(0,20,110,0.35),inset 0 0 0 2.100px rgba(140,135,225,0.35)"></div>
<div class="abs" style="left:2.500px;top:2.500px;width:20px;height:20px;border-radius:50%;background:linear-gradient(135deg,#7450c4,#4038a8)"></div>
<svg class="abs" style="left:5.500px;top:5.500px" width="14" height="14" viewBox="0 0 14 14"><g fill="none" stroke="rgba(175,195,230,0.8)" stroke-width="1.100" stroke-linecap="round"><path d="M11.800 8.600 A5.200 5.200 0 1 1 9.600 2.500"/><circle cx="7" cy="7" r="2.300" fill="rgba(175,195,230,0.75)" stroke="none"/><path d="M6.200 6.200 L7.800 7.800" stroke="#4a3cae" stroke-width="0.900"/></g></svg></div><div class="ricon" style="top:417.5px;background:#1d5a9e"></div><svg class="abs" style="left:1236px;top:422.5px" width="14" height="14" viewBox="0 0 14 14"><path d="M2.400 1.200 L4.600 1 L5.600 4 L4.200 5.200 C4.900 6.900 6.300 8.400 8 9.200 L9.200 7.800 L12.200 9 L12 11.200 C11.900 12 11.200 12.600 10.400 12.500 C5.600 12 1.800 8 1.200 3 C1.100 2.100 1.600 1.300 2.400 1.200 Z" fill="#a3bfdf"/><path d="M7.800 1.200 C10.400 1.500 12.400 3.500 12.700 6.100 M7.800 3.600 C9.100 3.900 10 4.800 10.300 6.100" fill="none" stroke="#a3bfdf" stroke-width="1.100" stroke-linecap="round"/></svg><div class="ricon" style="top:452.55px;background:#554f77"></div><div class="t" style="left:1236px;top:460.05px;font-size:9px;color:#9a96b0;letter-spacing:0.2px">BC</div><div class="ricon" style="top:487.6px;background:#1f7a5e"></div><div class="t" style="left:1239px;top:494.90000000000003px;font-size:9.5px;color:#7fb6a4">M</div><div class="ricon" style="top:522.65px;background:#1a5597"></div><svg class="abs" style="left:1235px;top:528.65px" width="16" height="13" viewBox="0 0 16 13"><rect x="3" y="2.500" width="12" height="9" rx="1" fill="none" stroke="#7ea1cf" stroke-width="1"/><rect x="0.500" y="0.500" width="12" height="9" rx="1" fill="#7ea1cf"/><circle cx="4" cy="3.800" r="1.300" fill="#1a5597"/><path d="M1.800 7.800 Q1.800 5.800 4 5.800 Q6.200 5.800 6.200 7.800 Z" fill="#1a5597"/><path d="M7.500 3.500 H11 M7.500 5.800 H10" stroke="#1a5597" stroke-width="1"/></svg><div class="ricon" style="top:557.7px;background:#1f6876"></div><svg class="abs" style="left:1236.500px;top:563.5px" width="13" height="12.500" viewBox="0 0 13 12.500"><path d="M0.500 0.500 H12.500 V12 H0.500 Z" fill="#88adb6"/><path d="M2.600 2.600 H10.400 V7.400 H8.600 V9.400 H4.400 V7.400 H2.600 Z" fill="#1f6876"/><path d="M4.800 5 L6.100 6.300 L8.600 3.600" fill="none" stroke="#88adb6" stroke-width="1.300"/></svg><div class="ricon" style="top:592.75px;background:#1f5b94"></div><svg class="abs" style="left:1236.500px;top:598.55px" width="13" height="12.500" viewBox="0 0 13 12.500"><path d="M0.500 0.500 H12.500 V12 H0.500 Z" fill="#86a4ca"/><path d="M2.600 2.600 H10.400 V7.400 H8.600 V9.400 H4.400 V7.400 H2.600 Z" fill="#1f5b94"/><path d="M4.800 5 L6.100 6.300 L8.600 3.600" fill="none" stroke="#86a4ca" stroke-width="1.300"/></svg><svg class="abs" style="left:1230px;top:627.5px" width="26" height="26" viewBox="0 0 26 26"><path d="M13 1 L23.500 7 V19 L13 25 L2.500 19 V7 Z" fill="none" stroke="#16704f" stroke-width="1" stroke-dasharray="1.500 1"/><path d="M13 3.500 L21.400 8.300 V17.700 L13 22.500 L4.600 17.700 V8.300 Z" fill="#12694a"/></svg>
<div class="t" style="left:1236.500px;top:636.8px;font-size:9px;color:#6fb395">OF</div>
</div>
</div>
</body>
</html>
